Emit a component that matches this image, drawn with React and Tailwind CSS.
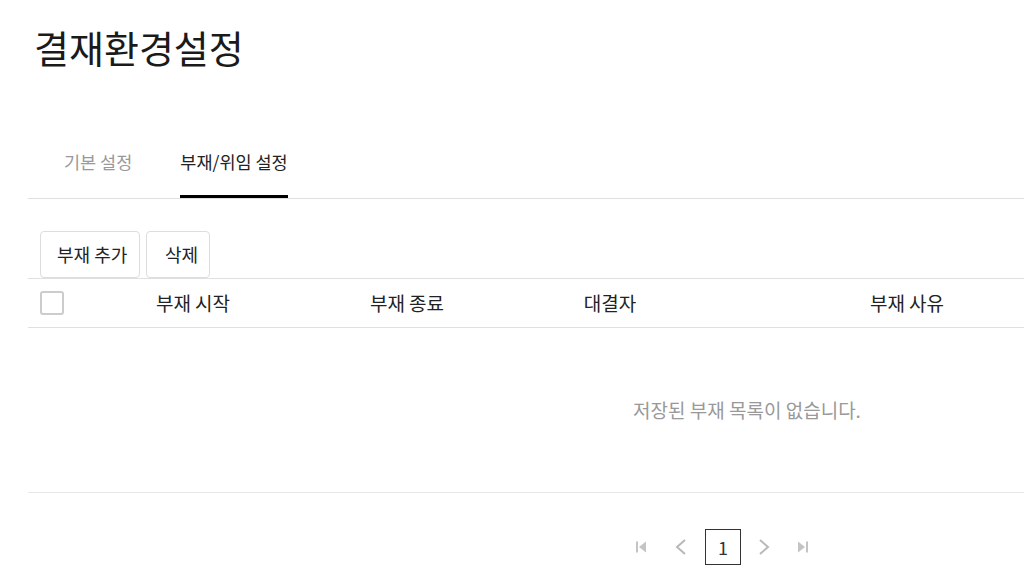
import React from "react";

const font = { fontFamily: '"Noto Sans CJK KR", "Noto Sans", sans-serif' };

function FirstIcon() {
  return (
    <svg width="10" height="12" viewBox="0 0 10 12" className="text-[#c4c4c4]">
      <rect x="0" y="0.5" width="2" height="11" fill="currentColor" />
      <path d="M10 0.5 L3 6 L10 11.5 Z" fill="currentColor" />
    </svg>
  );
}

function LastIcon() {
  return (
    <svg width="10" height="12" viewBox="0 0 10 12" className="text-[#c4c4c4]">
      <path d="M0 0.5 L7 6 L0 11.5 Z" fill="currentColor" />
      <rect x="8" y="0.5" width="2" height="11" fill="currentColor" />
    </svg>
  );
}

function Chevron({ dir }) {
  return (
    <svg width="13" height="18" viewBox="0 0 13 18" className="text-[#b8b8b8]">
      <path
        d={dir === "left" ? "M11 2 L3 9 L11 16" : "M2 2 L10 9 L2 16"}
        fill="none"
        stroke="currentColor"
        strokeWidth="2"
      />
    </svg>
  );
}

export default function App() {
  return (
    <div className="w-[1024px] h-[588px] overflow-hidden bg-white text-[#222]" style={font}>
      <div className="pl-7">
        <h1 className="pl-[6px] pt-[20px] text-[38px] leading-[54px] font-normal text-[#1a1a1a]">
          결재환경설정
        </h1>

        <div className="mt-[52px] flex border-b border-[#e0e0e0] w-[1200px]">
          <div className="ml-9 h-[72px] flex items-center text-[17.5px] text-[#999]">기본 설정</div>
          <div className="ml-12 h-[72px] -mb-px flex items-center text-[17.5px] text-[#222] border-b-[3px] border-black pt-[4px]">
            부재/위임 설정
          </div>
        </div>

        <div className="pl-3 pt-8 flex gap-[6px]">
          <button className="w-[100px] h-[47px] pl-[16px] text-left border border-[#dddddd] rounded-[4px] text-[18px] text-[#222]">
            부재 추가
          </button>
          <button className="w-[64px] h-[47px] pl-[18px] text-left border border-[#dddddd] rounded-[4px] text-[18px] text-[#222]">
            삭제
          </button>
        </div>

        <div className="w-[1200px]">
          <div className="grid grid-cols-[52px_226px_202px_204px_390px] h-[50px] border-y border-[#e0e0e0] items-center text-[19px] text-[#222]">
            <div className="pl-3 flex items-center">
              <span className="w-6 h-6 border-2 border-[#cccccc] rounded-[3px] bg-white" />
            </div>
            <div className="text-center">부재 시작</div>
            <div className="text-center">부재 종료</div>
            <div className="text-center">대결자</div>
            <div className="text-center">부재 사유</div>
          </div>
          <div className="h-[165px] border-b border-[#e8e8e8] flex items-center">
            <div className="w-[1438px] shrink-0 text-center text-[19px] text-[#999]">
              저장된 부재 목록이 없습니다.
            </div>
          </div>
        </div>

        <div className="w-[1388px] pt-[36px] flex items-center justify-center">
          <div className="flex items-center">
            <FirstIcon />
            <div className="ml-[28px]"><Chevron dir="left" /></div>
            <div className="ml-[18px] w-9 h-9 border border-[#333] flex items-center justify-center text-lg text-[#333]">
              1
            </div>
            <div className="ml-[17px]"><Chevron dir="right" /></div>
            <div className="ml-[27px]"><LastIcon /></div>
          </div>
        </div>
      </div>
    </div>
  );
}
